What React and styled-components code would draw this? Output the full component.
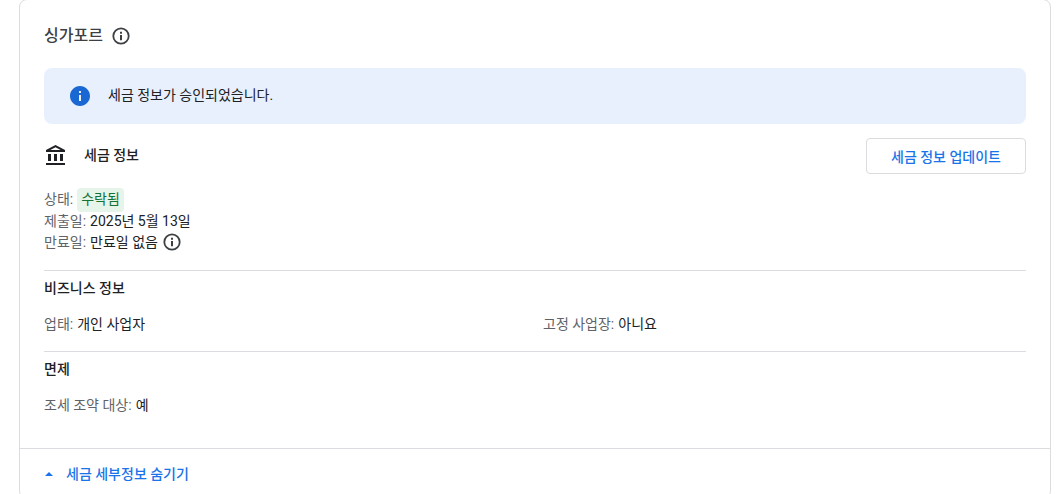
import React from "react";
import styled, { createGlobalStyle } from "styled-components";

const GlobalStyle = createGlobalStyle`
  *, *::before, *::after { box-sizing: border-box; }
  body {
    margin: 0;
    background: #fff;
    color: #202124;
    font-family: Roboto, "Noto Sans CJK KR", sans-serif;
    font-size: 14px;
    line-height: 20px;
    overflow: hidden;
  }
  h2, h3, h4, p, dl, dd { margin: 0; }
`;

const Card = styled.main`
  margin: -1px 9px 0 19px;
  border: 1px solid #dadce0;
  border-radius: 8px;
`;

const Body = styled.div`
  padding: 24px 24px 33px;
`;

const TitleRow = styled.header`
  display: flex;
  align-items: center;
  gap: 8px;
  height: 24px;
`;

const Title = styled.h2`
  font-size: 16px;
  font-weight: 500;
  line-height: 24px;
  color: #3c4043;
`;

const IconButton = styled.button`
  display: inline-flex;
  padding: 0;
  border: 0;
  background: none;
  color: #3c4043;
  cursor: pointer;
`;

const Icon = styled.svg`
  display: block;
  flex: none;
  width: ${(p) => p.$size}px;
  height: ${(p) => p.$size}px;
  fill: currentColor;
`;

const Banner = styled.div`
  display: flex;
  align-items: flex-start;
  gap: 16px;
  margin-top: 20px;
  padding: 16px 24px;
  border-radius: 8px;
  background: #e8f0fe;
  color: #1967d2;
`;

const BannerText = styled.p`
  line-height: 22px;
  color: #202124;
`;

const SectionRow = styled.div`
  display: flex;
  align-items: center;
  gap: 16px;
  margin-top: 14px;
`;

const SectionTitle = styled.h3`
  flex: 1;
  padding-bottom: 2px;
  font-size: 14px;
  font-weight: 500;
`;

const OutlineButton = styled.button`
  height: 36px;
  padding: 2px 24px 0;
  border: 1px solid #dadce0;
  border-radius: 4px;
  background: #fff;
  color: #1a73e8;
  font: inherit;
  font-weight: 500;
  cursor: pointer;
`;

const Details = styled.dl`
  margin-top: 14px;
`;

const Field = styled.div`
  display: flex;
  align-items: baseline;
  gap: 4px;
  height: ${(p) => p.$height || 20}px;
`;

const Label = styled.dt`
  color: #5f6368;
`;

const Value = styled.dd`
  display: flex;
  align-items: center;
  gap: 4px;
`;

const Badge = styled.span`
  padding: 1px 4px 3px;
  border-radius: 4px;
  background: #e6f4ea;
  color: #137333;
`;

const Group = styled.section`
  margin-top: ${(p) => p.$gap}px;
  padding-top: 7px;
  border-top: 1px solid #dadce0;
`;

const GroupTitle = styled.h4`
  font-size: 14px;
  font-weight: 500;
`;

const Columns = styled.dl`
  display: grid;
  grid-template-columns: 1fr 1fr;
  column-gap: 16px;
  margin-top: 16px;
`;

const Footer = styled.footer`
  height: 50px;
  padding: 0 24px;
  border-top: 1px solid #dadce0;
`;

const ToggleButton = styled.button`
  display: flex;
  align-items: center;
  gap: 12px;
  height: 49px;
  padding: 0;
  border: 0;
  background: none;
  color: #1a73e8;
  font: inherit;
  font-weight: 500;
  cursor: pointer;
`;

const InfoOutline = ({ label }) => (
  <IconButton type="button" aria-label={label}>
    <Icon $size={20} viewBox="0 0 20 20" aria-hidden="true">
      <circle cx="10" cy="10" r="7.7" fill="none" stroke="currentColor" strokeWidth="1.8" />
      <path d="M9 5.8h2v2H9zM9 9h2v5.2H9z" />
    </Icon>
  </IconButton>
);

export default function App() {
  return (
    <>
      <GlobalStyle />
      <Card>
        <Body>
          <TitleRow>
            <Title>싱가포르</Title>
            <InfoOutline label="싱가포르" />
          </TitleRow>
          <Banner role="status">
            <Icon $size={24} viewBox="0 0 24 24" aria-hidden="true">
              <path d="M12 2C6.48 2 2 6.48 2 12s4.48 10 10 10 10-4.48 10-10S17.52 2 12 2zm1 15h-2v-6h2v6zm0-8h-2V7h2v2z" />
            </Icon>
            <BannerText>세금 정보가 승인되었습니다.</BannerText>
          </Banner>
          <SectionRow>
            <Icon $size={24} viewBox="0 0 24 24" aria-hidden="true">
              <path d="M4 10h3v7H4zM10 10h3v7h-3zM16 10h3v7h-3zM2 19h19v2H2zM11.5 1L2 6v2h19V6zm0 2.26L16.71 6H6.29z" fillRule="evenodd" />
            </Icon>
            <SectionTitle>세금 정보</SectionTitle>
            <OutlineButton type="button">세금 정보 업데이트</OutlineButton>
          </SectionRow>
          <Details>
            <Field $height={23}>
              <Label>상태:</Label>
              <Value><Badge>수락됨</Badge></Value>
            </Field>
            <Field $height={21}>
              <Label>제출일:</Label>
              <Value>2025년 5월 13일</Value>
            </Field>
            <Field>
              <Label>만료일:</Label>
              <Value>만료일 없음 <InfoOutline label="만료일" /></Value>
            </Field>
          </Details>
          <Group $gap={18}>
            <GroupTitle>비즈니스 정보</GroupTitle>
            <Columns>
              <Field><Label>업태:</Label><Value>개인 사업자</Value></Field>
              <Field><Label>고정 사업장:</Label><Value>아니요</Value></Field>
            </Columns>
          </Group>
          <Group $gap={17}>
            <GroupTitle>면제</GroupTitle>
            <Columns>
              <Field><Label>조세 조약 대상:</Label><Value>예</Value></Field>
            </Columns>
          </Group>
        </Body>
        <Footer>
          <ToggleButton type="button" aria-expanded="true">
            <Icon $size={10} viewBox="0 0 10 10" aria-hidden="true">
              <path d="M1 7l4-4 4 4z" />
            </Icon>
            세금 세부정보 숨기기
          </ToggleButton>
        </Footer>
      </Card>
    </>
  );
}
